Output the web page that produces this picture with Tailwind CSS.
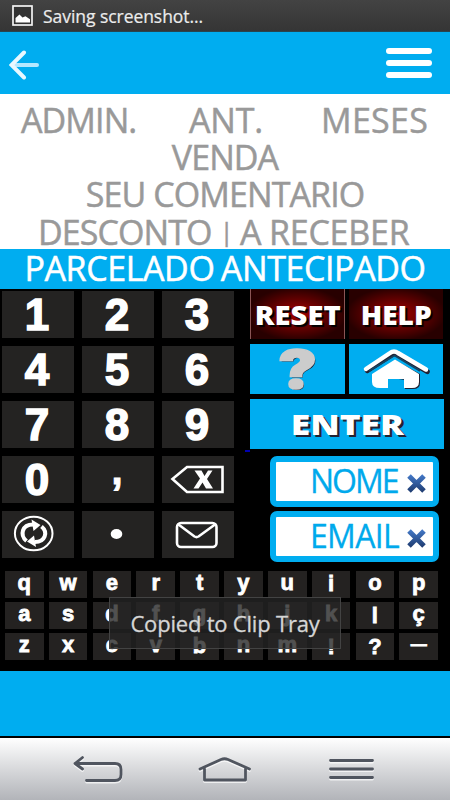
<!DOCTYPE html>
<html lang="pt">
<head>
<meta charset="utf-8">
<title>Calculadora</title>
<script src="https://cdn.jsdelivr.net/npm/@tailwindcss/browser@4"></script>
</head>
<body class="w-[450px] h-[800px] overflow-hidden bg-black font-['Open_Sans',sans-serif]">
<div class="relative flex flex-col w-[450px] h-[800px]">

  <!-- Status bar -->
  <div class="h-8 shrink-0 flex items-center pl-3 gap-[10px] bg-linear-to-b from-[#434343] to-[#353535] border-b border-[#28454f]">
    <svg class="w-[21px] h-[21px]" viewBox="0 0 21 21"><rect x="1" y="1" width="19" height="19" fill="#333" stroke="#f4f4f4" stroke-width="1.7"/><path d="M3.500 17.500V13l4-3.500 3 3 3-1.300 4.500 3v3.300z" fill="#fff"/></svg>
    <span class="text-[17.5px] leading-[30px] text-[#ececec] tracking-[-0.05px] whitespace-nowrap [-webkit-text-stroke:0.2px_#ececec]">Saving screenshot...</span>
  </div>

  <!-- Title bar -->
  <header class="h-[62px] shrink-0 flex items-center justify-between pl-[9px] pr-[18px] bg-[#00adf0]">
    <svg class="w-8 h-8 mt-1" viewBox="0 0 32 32" fill="none" stroke-linecap="round"><path d="M5 16h23" stroke="#b5e8ff" stroke-width="4"/><path d="M15 3.500L2.500 16 15 28.500" stroke="#e8f8ff" stroke-width="4"/></svg>
    <div class="w-[46px] flex flex-col gap-[6px]">
      <i class="h-[6px] rounded-full bg-white"></i><i class="h-[6px] rounded-full bg-white"></i><i class="h-[6px] rounded-full bg-white"></i>
    </div>
  </header>

  <!-- Fields -->
  <section class="h-[155px] shrink-0 bg-white text-[#999] text-[34px] leading-[37.400px] pt-[7.500px] text-center whitespace-nowrap [-webkit-text-stroke:0.5px_#999]">
    <div class="flex pl-[21px]"><span class="w-[168px] text-left tracking-[-0.9px]">ADMIN.</span><span class="w-[132px] text-left tracking-[-0.2px]">ANT.</span><span class="tracking-[0.3px]">MESES</span></div>
    <div class="tracking-[-0.9px]">VENDA</div>
    <div class="tracking-[-0.9px]">SEU COMENTARIO</div>
    <div class="flex pl-[38px] h-[37px]"><span class="w-[184px] text-left tracking-[-0.900px]">DESCONTO</span><span class="w-[9px] flex justify-center text-[25px] leading-[35px]">|</span><span class="pl-[9px] tracking-[-0.200px] [word-spacing:-1px]">A RECEBER</span></div>
  </section>
  <div class="h-[40px] shrink-0 bg-[#00adf0] text-white text-[34px] leading-[38px] text-center whitespace-nowrap tracking-[-0.400px] [word-spacing:-2px] [-webkit-text-stroke:0.5px_white]">PARCELADO ANTECIPADO</div>

  <!-- Keypad -->
  <main class="h-[382px] shrink-0 bg-black">
    <div class="flex h-[282px]">
      <div class="w-[250px] pl-[2px] pt-[2px] grid grid-cols-[72px_72px_72px] auto-rows-[47px] gap-x-[8px] gap-y-[8px] content-start font-['Liberation_Sans',sans-serif] font-bold text-white text-[44px] leading-[48px] text-center">
        <div class="bg-[#242322] pr-[2px] [-webkit-text-stroke:1.5px_white]">1</div><div class="bg-[#242322] pr-[2px] [-webkit-text-stroke:1.5px_white]">2</div><div class="bg-[#242322] pr-[2px] [-webkit-text-stroke:1.5px_white]">3</div>
        <div class="bg-[#242322] pr-[2px] [-webkit-text-stroke:1.5px_white]">4</div><div class="bg-[#242322] pr-[2px] [-webkit-text-stroke:1.5px_white]">5</div><div class="bg-[#242322] pr-[2px] [-webkit-text-stroke:1.5px_white]">6</div>
        <div class="bg-[#242322] pr-[2px] [-webkit-text-stroke:1.5px_white]">7</div><div class="bg-[#242322] pr-[2px] [-webkit-text-stroke:1.5px_white]">8</div><div class="bg-[#242322] pr-[2px] [-webkit-text-stroke:1.5px_white]">9</div>
        <div class="bg-[#242322] pr-[2px] [-webkit-text-stroke:1.5px_white]">0</div>
        <div class="bg-[#242322] pr-[2px] text-[40px] leading-[29px] [-webkit-text-stroke:1px_white]">,</div>
        <div class="bg-[#242322]"><svg class="w-[72px] h-[47px]" viewBox="0 0 72 47"><path d="M10.500 23L25 11h35.500v25H25z" fill="none" stroke="#fff" stroke-width="2.600"/><path d="M32.500 14.500h7l3 5.500 3.500-5.500h4.500l-5.500 8.500 6 9.500h-7l-3.500-6-4 6h-5l6.500-10z" fill="#fff"/></svg></div>
        <div class="bg-[#242322]"><svg class="w-[72px] h-[47px]" viewBox="0 0 72 47" fill="none"><ellipse cx="31.700" cy="22.500" rx="18.800" ry="16.800" stroke="#fff" stroke-width="2"/><path d="M24.500 30C17.500 24 20 13.500 31 13.500M39.500 15.500C46.500 21.500 43 31 33 31" stroke="#fff" stroke-width="4"/><path d="M29.500 8.500l9 5.500-7 6zM34 36l-9-5.500 7-6z" fill="#fff"/></svg></div>
        <div class="bg-[#242322]"><svg class="w-[72px] h-[47px]" viewBox="0 0 72 47"><ellipse cx="34.500" cy="23" rx="5.800" ry="4.900" fill="#fff"/></svg></div>
        <div class="bg-[#242322]"><svg class="w-[72px] h-[47px]" viewBox="0 0 72 47" fill="none" stroke="#fff" stroke-width="2.600" stroke-linejoin="round"><rect x="15" y="12" width="39.500" height="24" rx="4"/><path d="M16.500 13.500l16 12q2 1.200 4 0l16.500-12"/></svg></div>
      </div>

      <div class="flex flex-col w-[194px] gap-[5px] font-['Liberation_Sans',sans-serif] font-bold text-white">
        <div class="flex gap-[4px] h-[50px] font-['Open_Sans',sans-serif] font-extrabold text-[27px] leading-[52px] text-center">
          <div class="w-[95px] flex justify-center bg-[radial-gradient(ellipse_at_center,#a80000_0%,#280000_75%)] border-x border-[#8a5555] [text-shadow:2px_2px_1px_#000]"><span class="inline-block whitespace-nowrap scale-x-[1.08]">RESET</span></div>
          <div class="w-[94px] bg-[radial-gradient(ellipse_at_center,#a80000_0%,#280000_75%)] [text-shadow:2px_2px_1px_#000]"><span class="inline-block whitespace-nowrap scale-x-[1.04]">HELP</span></div>
        </div>
        <div class="flex gap-[4px] h-[50px]">
          <div class="w-[95px] bg-[#00adf0] text-center"><span class="inline-block font-['Inter',sans-serif] font-black text-[52px] leading-[51px] text-[#ccc] scale-x-[1.25] [-webkit-text-stroke:1.500px_#ccc] [text-shadow:1px_1px_0_#223]">?</span></div>
          <div class="w-[94px] bg-[#00adf0]"><svg class="w-[94px] h-[50px]" viewBox="0 0 94 50"><path transform="translate(1.300 1.200)" d="M17 25.500L41 10q4-3 8 0l28 16.500" fill="none" stroke="#223" stroke-width="5" stroke-linecap="round"/><path d="M24.500 31L47 16.500l24 13.500v9q0 6-7 6h-8V36" fill="#223"/><path d="M23 30L46 15.500l24 14.500v8q0 6-7 6h-8V35H39v9h-8q-8 0-8-6z" fill="#fff"/><path d="M17 25L41 9q4-3 8 0l28 16.500" fill="none" stroke="#fff" stroke-width="4.500" stroke-linecap="round"/><path d="M20 27L45.500 11.500 71 27" fill="none" stroke="#174563" stroke-width="1.500"/></svg></div>
        </div>
        <div class="h-[50px] bg-[#00adf0] font-['Open_Sans',sans-serif] font-extrabold text-[29px] leading-[49px] text-center"><span class="inline-block scale-x-[1.22] [text-shadow:2px_2px_0_#223]">ENTER</span></div>
        <div class="flex flex-col gap-[4px] pl-5 mt-[2px] mr-[5px] font-['Open_Sans',sans-serif] font-normal text-[#00a9ec] text-[32px] leading-[38px] [-webkit-text-stroke:0.3px_#00a9ec]">
          <div class="h-[51px] shrink-0 flex items-center border-6 border-[#00adf0] rounded-[7px] bg-white pl-[34px]"><span class="w-[96px] -mt-[2px] whitespace-nowrap tracking-[-2px]">NOME</span><svg class="w-[21px] h-[21px] shrink-0 mt-[4px]" viewBox="0 0 21 21"><defs><linearGradient id="x" x1="0" y1="0" x2="0" y2="21" gradientUnits="userSpaceOnUse"><stop stop-color="#477fd0"/><stop offset="1" stop-color="#1b3567"/></linearGradient></defs><path d="M3 3l15 15M18 3L3 18" stroke="url(#x)" stroke-width="5"/></svg></div>
          <div class="h-[51px] shrink-0 flex items-center border-6 border-[#00adf0] rounded-[7px] bg-white pl-[34px]"><span class="w-[96px] -mt-[2px] whitespace-nowrap tracking-[-0.700px]">EMAIL</span><svg class="w-[21px] h-[21px] shrink-0 mt-[4px]" viewBox="0 0 21 21"><path d="M3 3l15 15M18 3L3 18" stroke="url(#x)" stroke-width="5"/></svg></div>
        </div>
      </div>
    </div>

    <div class="grid grid-cols-10 auto-rows-[26.500px] gap-x-[5.200px] gap-y-[4.500px] w-[433px] ml-[5px] text-center text-white font-['Liberation_Sans',sans-serif] font-bold text-[22px] leading-[23px] [-webkit-text-stroke:0.8px_white]">
      <b class="bg-[#242221]">q</b><b class="bg-[#242221]">w</b><b class="bg-[#242221]">e</b><b class="bg-[#242221]">r</b><b class="bg-[#242221]">t</b><b class="bg-[#242221]">y</b><b class="bg-[#242221]">u</b><b class="bg-[#242221] leading-[26px]">i</b><b class="bg-[#242221]">o</b><b class="bg-[#242221]">p</b>
      <b class="bg-[#242221]">a</b><b class="bg-[#242221]">s</b><b class="bg-[#242221]">d</b><b class="bg-[#242221]">f</b><b class="bg-[#242221]">g</b><b class="bg-[#242221]">h</b><b class="bg-[#242221]">j</b><b class="bg-[#242221]">k</b><b class="bg-[#242221] leading-[27px]">l</b><b class="bg-[#242221]">ç</b>
      <b class="bg-[#242221]">z</b><b class="bg-[#242221]">x</b><b class="bg-[#242221]">c</b><b class="bg-[#242221]">v</b><b class="bg-[#242221] leading-[26px]">b</b><b class="bg-[#242221]">n</b><b class="bg-[#242221]">m</b><b class="bg-[#242221] leading-[27px]">!</b><b class="bg-[#242221] leading-[27px]">?</b><b class="bg-[#242221] text-[16px]">—</b>
    </div>
  </main>

  <div class="h-[67px] shrink-0 bg-[#00adf0] border-b-2 border-black"></div>

  <!-- System navigation -->
  <nav class="h-[62px] shrink-0 bg-linear-to-b from-white to-[#b2b4b9]">
    <svg class="w-[450px] h-[62px]" viewBox="0 0 450 62" fill="none" stroke-linecap="round" stroke-linejoin="round">
      <path transform="translate(0 1.500)" d="M82.500 19.500L75 25.500l7.500 5.500M75 25.500h40q6 0 6 6v5q0 6-6 6H86.500M200 31l21-9.500q3.500-1.500 7 0l21.500 9.500M204.500 31v11h41V31M330.500 22.500h42M330.500 31h42M330.500 39.500h42" stroke="#fff" stroke-opacity=".7" stroke-width="2.800"/>
      <path d="M82.500 19.500L75 25.500l7.500 5.500M75 25.500h40q6 0 6 6v5q0 6-6 6H86.500M200 31l21-9.500q3.500-1.500 7 0l21.500 9.500M204.500 31v11h41V31M330.500 22.500h42M330.500 31h42M330.500 39.500h42" stroke="#50555f" stroke-width="2.800"/>
    </svg>
  </nav>

  <div class="absolute left-[245px] top-[450px] w-[5px] h-[2px] bg-[#0000b0]"></div>
  <div class="absolute left-[109px] top-[597px] w-[232px] h-[52px] border border-[#434343] bg-[#252525]/80 text-[#d6d6d6] text-[22px] leading-[51px] text-center whitespace-nowrap tracking-[-0.2px] [-webkit-text-stroke:0.3px_#d6d6d6]">Copied to Clip Tray</div>
</div>
</body>
</html>
